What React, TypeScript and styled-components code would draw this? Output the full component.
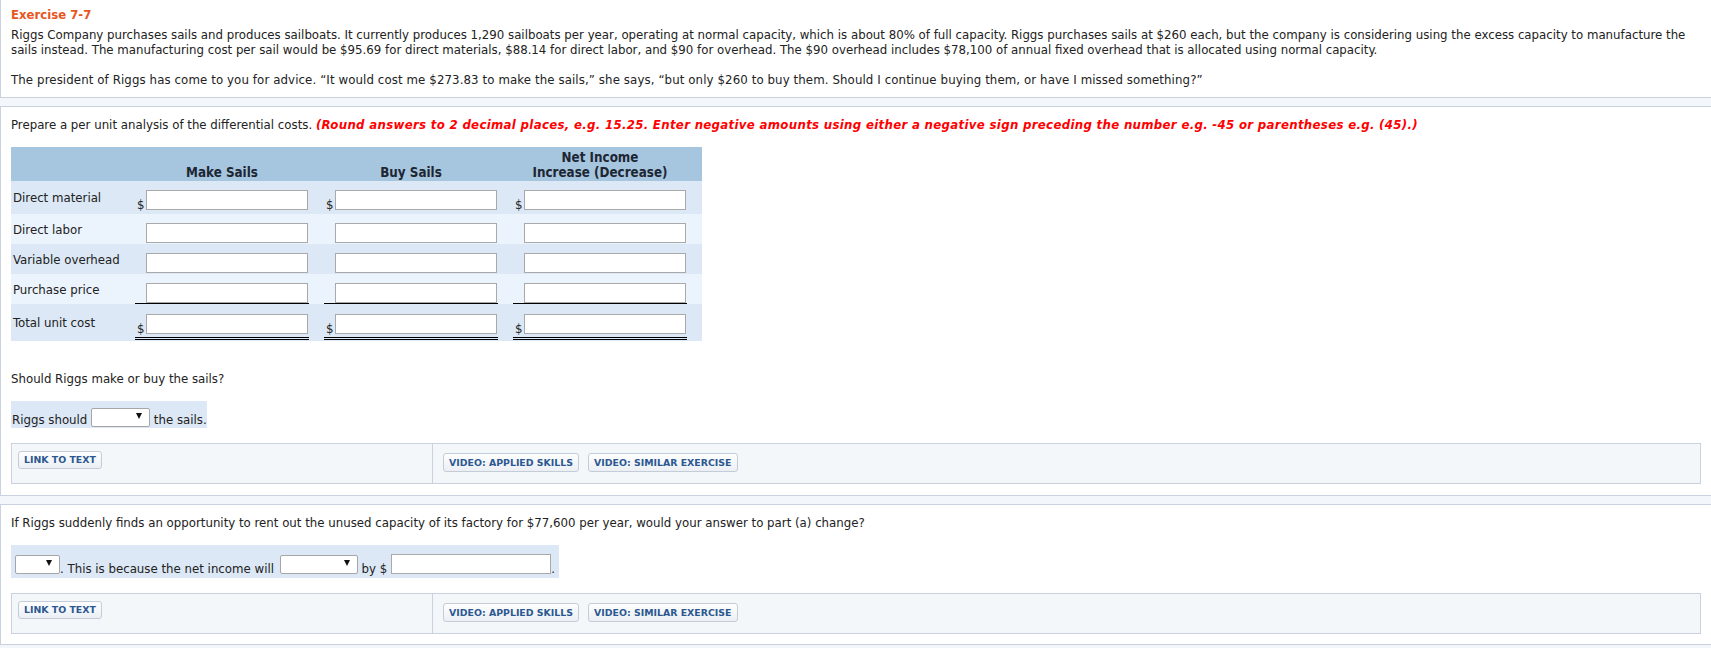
import React from "react";
import styled, { createGlobalStyle } from "styled-components";

const GlobalStyle = createGlobalStyle`
  html, body { margin: 0; padding: 0; background: #f3f6fa; }
  body {
    font-family: "DejaVu Sans Condensed", "DejaVu Sans", sans-serif;
    font-size: 13.1px;
    line-height: 15px;
    color: #222;
    overflow: hidden;
  }
  * { box-sizing: border-box; }
`;

const Page = styled.div`
  display: flex;
  flex-direction: column;
  gap: 8px;
  background: #f3f6fa;
  min-height: 648px;
`;

const Panel = styled.section<{ $first?: boolean; $pt: number; $pb: number }>`
  background: #fff;
  border: 1px solid #c9d2de;
  border-right: none;
  border-top: ${(p) => (p.$first ? "none" : "1px solid #c9d2de")};
  padding: ${(p) => `${p.$pt}px 10px ${p.$pb}px 10px`};
  display: flex;
  flex-direction: column;
  align-items: flex-start;
`;

const Title = styled.h2`
  margin: 0 0 4px 0;
  font-size: 13px;
  line-height: 16px;
  font-weight: bold;
  color: #e6561e;
`;

const Para = styled.p<{ $mt?: number; $ls?: number }>`
  margin: ${(p) => p.$mt ?? 0}px 0 0 0;
  width: 100%;
  letter-spacing: ${(p) => p.$ls ?? 0}px;
`;

const Note = styled.span`
  color: #ff0000;
  font-weight: bold;
  font-style: italic;
  letter-spacing: 0.3px;
`;

/* ---------- table ---------- */

const Grid = styled.div`
  margin-top: 15px;
  width: 691px;
  display: flex;
  flex-direction: column;
`;

const Row = styled.div<{ $bg: string; $h: number }>`
  display: grid;
  grid-template-columns: 124px repeat(3, 189px);
  height: ${(p) => p.$h}px;
  background: ${(p) => p.$bg};
`;

const HeadCell = styled.div`
  width: 174px;
  align-self: end;
  padding-bottom: 1px;
  text-align: center;
  font-weight: bold;
  font-size: 13.3px;
  color: #1d2633;
`;

const Label = styled.div`
  align-self: center;
  padding-left: 2px;
  white-space: nowrap;
`;

const ValueCell = styled.div<{ $pb: number }>`
  display: flex;
  align-items: flex-end;
  padding-bottom: ${(p) => p.$pb}px;
`;

const Field = styled.div<{ $line: "none" | "single" | "double"; $gap: number }>`
  width: 174px;
  display: flex;
  align-items: flex-end;
  padding-bottom: ${(p) => p.$gap}px;
  border-bottom: ${(p) =>
    p.$line === "single" ? "1px solid #000" : p.$line === "double" ? "3px double #000" : "none"};
`;

const Dollar = styled.span<{ $show: boolean }>`
  width: 11px;
  padding-left: 2px;
  margin-bottom: -2px;
  visibility: ${(p) => (p.$show ? "visible" : "hidden")};
`;

const Input = styled.input<{ $w?: number; $ml?: number }>`
  width: ${(p) => p.$w ?? 162}px;
  height: 20px;
  margin: 0 0 0 ${(p) => p.$ml ?? 0}px;
  padding: 0 3px;
  border: 1px solid #a9a9a9;
  background: #fff;
  font: inherit;
  outline: none;
  flex: none;
`;

/* ---------- answer line ---------- */

const Answer = styled.div<{ $pt: number; $pb: number; $w: number; $drop: number }>`
  margin-top: 15px;
  width: ${(p) => p.$w}px;
  background: #dce8f6;
  display: flex;
  align-items: flex-end;
  padding: ${(p) => `${p.$pt}px 0 ${p.$pb}px 1px`};
  white-space: pre;
  & > span {
    margin-bottom: ${(p) => -p.$drop}px;
  }
`;

const Select = styled.div<{ $w: number; $mx?: string }>`
  width: ${(p) => p.$w}px;
  height: 19px;
  margin: ${(p) => p.$mx ?? "0"};
  border: 1px solid #a6a6a6;
  border-radius: 2px;
  background: #fff;
  display: flex;
  justify-content: flex-end;
  align-items: flex-start;
  padding: 4px 7px 0 0;
  flex: none;
`;

const Caret = styled.i`
  width: 0;
  height: 0;
  border-left: 3px solid transparent;
  border-right: 3px solid transparent;
  border-top: 6px solid #111;
`;

/* ---------- button bar ---------- */

const Bar = styled.div`
  margin-top: 15px;
  width: 100%;
  height: 41px;
  display: grid;
  grid-template-columns: 421px 1fr;
  border: 1px solid #c9d2de;
  background: #f4f7fa;
`;

const BarCell = styled.div<{ $pad: string; $divider?: boolean }>`
  display: flex;
  align-items: flex-start;
  gap: 9px;
  padding: ${(p) => p.$pad};
  border-right: ${(p) => (p.$divider ? "1px solid #c9d2de" : "none")};
`;

const Button = styled.button<{ $h: number }>`
  height: ${(p) => p.$h}px;
  margin: 0;
  padding: 0 5px;
  border: 1px solid #c4ccd7;
  border-radius: 3px;
  background: linear-gradient(#fefefe, #ebeff4);
  color: #2c5891;
  font-family: "DejaVu Sans", sans-serif;
  font-weight: bold;
  font-size: 9.4px;
  line-height: 1;
  white-space: nowrap;
  cursor: pointer;
`;

function ButtonBar() {
  return (
    <Bar>
      <BarCell $pad="7px 6px" $divider>
        <Button $h={18}>LINK TO TEXT</Button>
      </BarCell>
      <BarCell $pad="9px 10px">
        <Button $h={19}>VIDEO: APPLIED SKILLS</Button>
        <Button $h={19}>VIDEO: SIMILAR EXERCISE</Button>
      </BarCell>
    </Bar>
  );
}

type RowSpec = {
  label: string;
  dollar: boolean;
  h: number;
  pb: number;
  line: "none" | "single" | "double";
  gap: number;
  bg: string;
};

const DARK = "#dce8f6";
const LIGHT = "#ebf3fd";

const rows: RowSpec[] = [
  { label: "Direct material", dollar: true, h: 33, pb: 4, line: "none", gap: 0, bg: DARK },
  { label: "Direct labor", dollar: false, h: 30, pb: 1, line: "none", gap: 0, bg: LIGHT },
  { label: "Variable overhead", dollar: false, h: 30, pb: 1, line: "none", gap: 0, bg: DARK },
  { label: "Purchase price", dollar: false, h: 30, pb: 0, line: "single", gap: 0, bg: LIGHT },
  { label: "Total unit cost", dollar: true, h: 37, pb: 1, line: "double", gap: 3, bg: DARK },
];

export default function App() {
  return (
    <>
      <GlobalStyle />
      <Page>
        <Panel $first $pt={7} $pb={10}>
          <Title>Exercise 7-7</Title>
          <Para>
            Riggs Company purchases sails and produces sailboats. It currently produces 1,290 sailboats per year,
            operating at normal capacity, which is about 80% of full capacity. Riggs purchases sails at $260 each, but
            the company is considering using the excess capacity to manufacture the sails instead. The manufacturing
            cost per sail would be $95.69 for direct materials, $88.14 for direct labor, and $90 for overhead. The $90
            overhead includes $78,100 of annual fixed overhead that is allocated using normal capacity.
          </Para>
          <Para $mt={15} $ls={0.1}>
            The president of Riggs has come to you for advice. {"\u201c"}It would cost me $273.83 to make the sails,
            {"\u201d"} she says, {"\u201c"}but only $260 to buy them. Should I continue buying them, or have I missed
            something?{"\u201d"}
          </Para>
        </Panel>

        <Panel $pt={10} $pb={11}>
          <Para>
            Prepare a per unit analysis of the differential costs.{" "}
            <Note>
              (Round answers to 2 decimal places, e.g. 15.25. Enter negative amounts using either a negative sign
              preceding the number e.g. -45 or parentheses e.g. (45).)
            </Note>
          </Para>

          <Grid>
            <Row $bg="#a6c5de" $h={34}>
              <div />
              <HeadCell>Make Sails</HeadCell>
              <HeadCell>Buy Sails</HeadCell>
              <HeadCell>
                Net Income
                <br />
                Increase (Decrease)
              </HeadCell>
            </Row>
            {rows.map((r) => (
              <Row key={r.label} $bg={r.bg} $h={r.h}>
                <Label>{r.label}</Label>
                {[0, 1, 2].map((i) => (
                  <ValueCell key={i} $pb={r.pb}>
                    <Field $line={r.line} $gap={r.gap}>
                      <Dollar $show={r.dollar}>$</Dollar>
                      <Input type="text" />
                    </Field>
                  </ValueCell>
                ))}
              </Row>
            ))}
          </Grid>

          <Para $mt={30}>Should Riggs make or buy the sails?</Para>

          <Answer $pt={7} $pb={1} $w={196} $drop={0}>
            <span>Riggs should </span>
            <Select $w={59}>
              <Caret />
            </Select>
            <span> the sails.</span>
          </Answer>

          <ButtonBar />
        </Panel>

        <Panel $pt={10} $pb={10}>
          <Para>
            If Riggs suddenly finds an opportunity to rent out the unused capacity of its factory for $77,600 per year,
            would your answer to part (a) change?
          </Para>

          <Answer $pt={9} $pb={4} $w={548} $drop={2}>
            <Select $w={45} $mx="0 0 0 3px">
              <Caret />
            </Select>
            <span>. This is because the net income will </span>
            <Select $w={78} $mx="0 0 0 2px">
              <Caret />
            </Select>
            <span> by $</span>
            <Input type="text" $w={160} $ml={4} />
            <span>.</span>
          </Answer>

          <ButtonBar />
        </Panel>
      </Page>
    </>
  );
}
